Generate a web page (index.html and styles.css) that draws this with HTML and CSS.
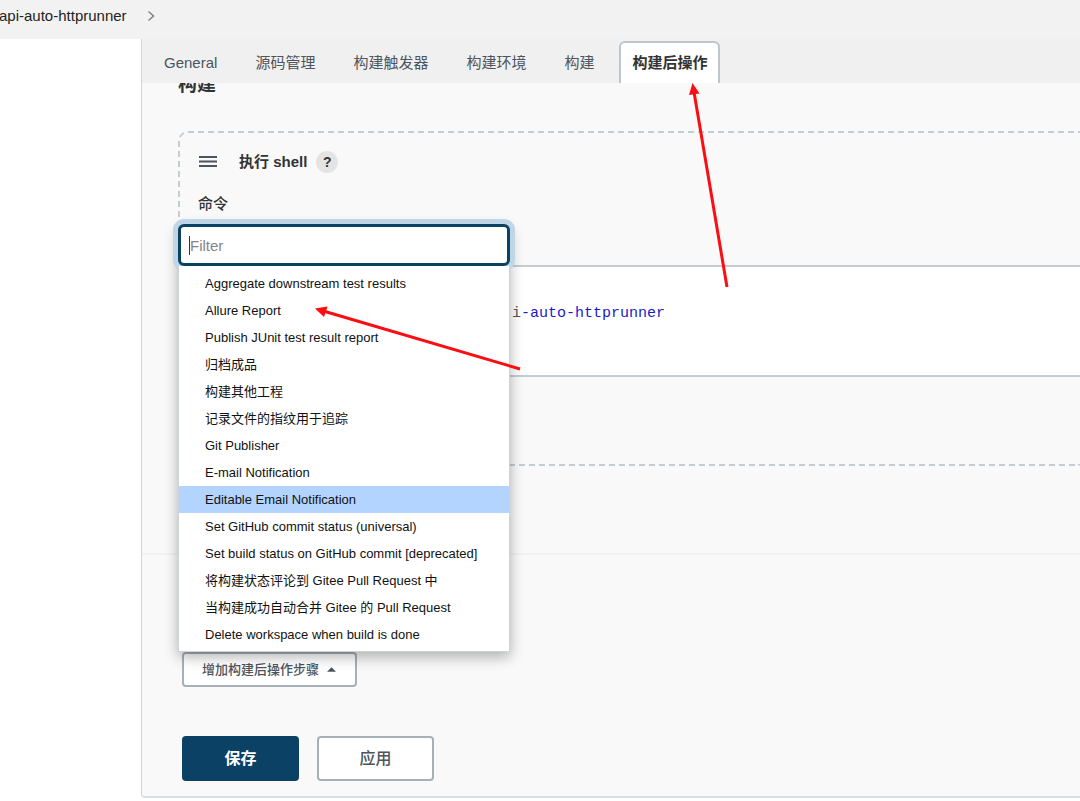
FILE: index.html
```html
<!DOCTYPE html>
<html lang="zh-CN">
<head>
<meta charset="utf-8">
<title>api-auto-httprunner</title>
<link rel="stylesheet" href="styles.css">
</head>
<body>
<nav class="breadcrumbs" aria-label="Breadcrumbs">
  <a class="crumb" href="#">api-auto-httprunner</a>
  <svg class="chevron" viewBox="0 0 8 12" aria-hidden="true"><path d="M1.5 1.5 6.5 6l-5 4.500"/></svg>
</nav>
<div class="page">
  <aside class="side"></aside>
  <main class="config">
    <nav class="tabs" aria-label="Sections">
      <a class="tab" href="#">General</a>
      <a class="tab" href="#">源码管理</a>
      <a class="tab" href="#">构建触发器</a>
      <a class="tab" href="#">构建环境</a>
      <a class="tab" href="#">构建</a>
      <a class="tab active" href="#">构建后操作</a>
    </nav>
    <form class="sections">
      <section class="builders">
        <h2 class="heading">构建</h2>
        <div class="chunk">
          <div class="chunk-head">
            <svg class="grip" viewBox="0 0 18 12" aria-hidden="true"><path d="M0 1h18M0 5.500h18M0 10h18"/></svg>
            <b class="chunk-title">执行 shell</b>
            <button class="help" type="button" aria-label="Help">?</button>
          </div>
          <div class="label">命令</div>
          <pre class="editor"><span class="plain">i</span>-auto-httprunner</pre>
        </div>
      </section>
      <section class="post">
        <div class="dropdown">
          <button class="btn add" type="button">增加构建后操作步骤 <svg class="up" viewBox="0 0 8 4" aria-hidden="true"><path d="M0 4 4 0l4 4z"/></svg></button>
          <div class="menu">
            <div class="filter-box">
              <input class="filter" type="text" placeholder="Filter" aria-label="Filter">
              <span class="caret"></span>
            </div>
            <ul class="options">
              <li><button class="option" type="button">Aggregate downstream test results</button></li>
              <li><button class="option" type="button">Allure Report</button></li>
              <li><button class="option" type="button">Publish JUnit test result report</button></li>
              <li><button class="option" type="button">归档成品</button></li>
              <li><button class="option" type="button">构建其他工程</button></li>
              <li><button class="option" type="button">记录文件的指纹用于追踪</button></li>
              <li><button class="option" type="button">Git Publisher</button></li>
              <li><button class="option" type="button">E-mail Notification</button></li>
              <li><button class="option selected" type="button">Editable Email Notification</button></li>
              <li><button class="option" type="button">Set GitHub commit status (universal)</button></li>
              <li><button class="option" type="button">Set build status on GitHub commit [deprecated]</button></li>
              <li><button class="option" type="button">将构建状态评论到 Gitee Pull Request 中</button></li>
              <li><button class="option" type="button">当构建成功自动合并 Gitee 的 Pull Request</button></li>
              <li><button class="option" type="button">Delete workspace when build is done</button></li>
            </ul>
          </div>
        </div>
        <div class="actions">
          <button class="btn main save" type="submit">保存</button>
          <button class="btn main" type="button">应用</button>
        </div>
      </section>
    </form>
  </main>
</div>
<svg class="arrows" width="800" height="400" viewBox="0 0 800 400" aria-hidden="true">
  <path class="shaft" d="M727 287 694 92M520 369 325 311.500"/>
  <path class="tip" d="M692.500 83 699.500 93.500 689 95zM315 308.500 327.500 306.500 324 317z"/>
</svg>
</body>
</html>
```

FILE: styles.css
```css
* { box-sizing: border-box; }

body {
  margin: 0;
  background: #fff;
  color: #333;
  font: 15px/20px "Liberation Sans", "Noto Sans CJK SC", sans-serif;
  overflow-x: hidden;
}

button, input { font: inherit; }
a { color: inherit; text-decoration: none; }

.breadcrumbs {
  display: flex;
  align-items: center;
  gap: 20px;
  height: 39px;
  padding-bottom: 8px;
  background: #f2f2f2;
}
.crumb { margin-left: -1px; color: #222; }
.chevron { width: 8px; height: 12px; fill: none; stroke: #808080; stroke-width: 1.500; }

.page { display: flex; }
.side { flex: 0 0 141px; }
.config {
  flex: 1;
  min-width: 0;
  background: #f9f9f9;
  border-left: 1px solid #cfd6dc;
  border-bottom: 2px solid #d9dfe3;
  border-bottom-left-radius: 4px;
}

.tabs {
  display: flex;
  gap: 12px;
  height: 44px;
  padding: 2px 0 0 9px;
  background: #f0f0f0;
  color: #4d545d;
}
.tab {
  padding: 10px 11px;
  border: 2px solid transparent;
  border-bottom: 0;
  white-space: nowrap;
}
.active {
  background: #fff;
  border-color: #bcc6ce;
  border-radius: 6px 6px 0 0;
  color: #333;
  font-weight: bold;
}

.builders {
  overflow: hidden;
  padding-left: 36px;
  padding-bottom: 87px;
  border-bottom: 2px solid #f2f2f2;
}
.heading {
  margin: -11px 0 33px;
  font-size: 19px;
  line-height: 26px;
}
.chunk {
  height: 335px;
  padding: 18px 0 0 18px;
  border: 2px dashed #c4cdd1;
  border-right: 0;
  border-radius: 10px 0 0 10px;
}
.chunk-head { display: flex; align-items: center; height: 22px; }
.grip { width: 18px; height: 12px; margin: 0 22px 0 1px; stroke: #4d545d; stroke-width: 2; }
.help {
  width: 22px;
  height: 22px;
  margin-left: 9px;
  padding: 0;
  border: 0;
  border-radius: 50%;
  background: #e4e4e4;
  color: #333;
  font-weight: bold;
  font-size: 14px;
}
.label { margin: 21px 0 51px; font-weight: 500; }
.editor {
  height: 112px;
  margin: 0;
  padding: 37px 0 0 312px;
  background: #fff;
  border: 2px solid #c4cdd1;
  border-right: 0;
  color: #1a1acc;
  font: 15px/20px "Liberation Mono", monospace;
}
.plain { color: #555; }

.post { padding: 97px 40px 15px; }
.dropdown { position: relative; width: max-content; }
.btn {
  background: #fff;
  border: 2px solid #a5b0b9;
  border-radius: 4px;
  color: #4d545d;
  font-weight: 500;
}
.add { height: 35px; padding: 0 19px 0 18px; font-size: 13px; }
.up { width: 9px; height: 5px; margin-left: 4px; vertical-align: 2px; fill: #4d545d; }

.menu {
  position: absolute;
  left: -4px;
  bottom: 100%;
  width: 332px;
  background: #fff;
  border-radius: 6px 6px 0 0;
  box-shadow: 0 5px 14px rgba(0, 0, 0, 0.3);
}
.filter-box { position: relative; }
.filter {
  display: block;
  width: 100%;
  height: 42px;
  padding: 0 9px;
  background: #fff;
  border: 3px solid #0b4264;
  border-radius: 6px;
  box-shadow: 0 0 0 5px #c0d5e6;
  outline: 0;
}
.filter::placeholder { color: #858585; opacity: 1; }
.caret { position: absolute; left: 11px; top: 12px; width: 1px; height: 19px; background: #333; }
.options {
  position: relative;
  margin: 0;
  padding: 4px 0 3px;
  background: #fff;
  border: 1px solid #ccd4d8;
  border-top: 0;
  list-style: none;
}
.option {
  display: block;
  width: 100%;
  height: 27px;
  padding: 0 26px;
  border: 0;
  background: none;
  color: #111;
  font-size: 13px;
  text-align: left;
  white-space: nowrap;
}
.selected { background: #b3d4ff; }

.actions { display: flex; gap: 18px; margin-top: 49px; }
.main { width: 117px; height: 45px; font-size: 16px; }
.save { background: #0b4164; border-color: #0b4164; color: #fff; font-weight: bold; }

.arrows { position: absolute; top: 0; left: 0; pointer-events: none; }
.shaft { fill: none; stroke: #fb0d12; stroke-width: 3; }
.tip { fill: #fb0d12; }
```
